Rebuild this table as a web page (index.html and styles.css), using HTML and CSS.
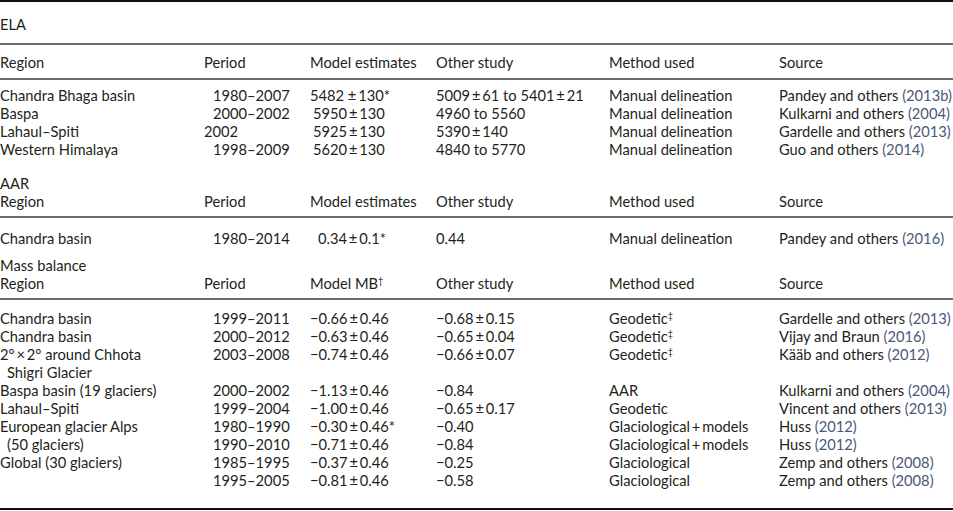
FILE: index.html
```html
<!DOCTYPE html>
<html lang="en">
<head>
<meta charset="utf-8">
<title>ELA, AAR and mass balance comparison</title>
<link rel="stylesheet" href="styles.css">
</head>
<body>
<div class="tbl">
  <div class="sec title-sec">
    <div class="row"><span class="full">ELA</span></div>
  </div>
  <div class="sec head-sec first-head">
    <div class="row"><span>Region</span><span>Period</span><span>Model estimates</span><span>Other study</span><span>Method used</span><span>Source</span></div>
  </div>
  <div class="sec body-sec ela">
    <div class="row"><span>Chandra Bhaga basin</span><span class="rng">1980–2007</span><span>5482 ±&#8201;130*</span><span>5009&#8201;±&#8201;61 to 5401&#8201;±&#8201;21</span><span>Manual delineation</span><span>Pandey and others <span class="yr">(2013b)</span></span></div>
    <div class="row"><span>Baspa</span><span class="rng">2000–2002</span><span class="ind">5950&#8201;±&#8201;130</span><span>4960 to 5560</span><span>Manual delineation</span><span>Kulkarni and others <span class="yr">(2004)</span></span></div>
    <div class="row"><span>Lahaul–Spiti</span><span>2002</span><span class="ind">5925&#8201;±&#8201;130</span><span>5390&#8201;±&#8201;140</span><span>Manual delineation</span><span>Gardelle and others <span class="yr">(2013)</span></span></div>
    <div class="row"><span>Western Himalaya</span><span class="rng">1998–2009</span><span class="ind">5620&#8201;±&#8201;130</span><span>4840 to 5770</span><span>Manual delineation</span><span>Guo and others <span class="yr">(2014)</span></span></div>
  </div>
  <div class="sec head-sec aar-head">
    <div class="row"><span class="full">AAR</span></div>
    <div class="row"><span>Region</span><span>Period</span><span>Model estimates</span><span>Other study</span><span>Method used</span><span>Source</span></div>
  </div>
  <div class="sec body-sec aar">
    <div class="row"><span>Chandra basin</span><span class="rng">1980–2014</span><span class="ind2">0.34&#8201;±&#8201;0.1*</span><span>0.44</span><span>Manual delineation</span><span>Pandey and others <span class="yr">(2016)</span></span></div>
  </div>
  <div class="sec head-sec mb-head">
    <div class="row"><span class="full">Mass balance</span></div>
    <div class="row"><span>Region</span><span>Period</span><span>Model MB<sup>†</sup></span><span>Other study</span><span>Method used</span><span>Source</span></div>
  </div>
  <div class="sec body-sec mb">
    <div class="row"><span>Chandra basin</span><span class="rng">1999–2011</span><span>−0.66&#8201;±&#8201;0.46</span><span>−0.68&#8201;±&#8201;0.15</span><span>Geodetic<sup>‡</sup></span><span>Gardelle and others <span class="yr">(2013)</span></span></div>
    <div class="row"><span>Chandra basin</span><span class="rng">2000–2012</span><span>−0.63&#8201;±&#8201;0.46</span><span>−0.65&#8201;±&#8201;0.04</span><span>Geodetic<sup>‡</sup></span><span>Vijay and Braun <span class="yr">(2016)</span></span></div>
    <div class="row"><span>2°&#8201;×&#8201;2° around Chhota</span><span class="rng">2003–2008</span><span>−0.74&#8201;±&#8201;0.46</span><span>−0.66&#8201;±&#8201;0.07</span><span>Geodetic<sup>‡</sup></span><span>Kääb and others <span class="yr">(2012)</span></span></div>
    <div class="row"><span class="cont">Shigri Glacier</span></div>
    <div class="row"><span>Baspa basin (19 glaciers)</span><span class="rng">2000–2002</span><span>−1.13&#8201;±&#8201;0.46</span><span>−0.84</span><span>AAR</span><span>Kulkarni and others <span class="yr">(2004)</span></span></div>
    <div class="row"><span>Lahaul–Spiti</span><span class="rng">1999–2004</span><span>−1.00&#8201;±&#8201;0.46</span><span>−0.65&#8201;±&#8201;0.17</span><span>Geodetic</span><span>Vincent and others <span class="yr">(2013)</span></span></div>
    <div class="row"><span>European glacier Alps</span><span class="rng">1980–1990</span><span>−0.30&#8201;±&#8201;0.46*</span><span>−0.40</span><span>Glaciological&#8201;+&#8201;models</span><span>Huss <span class="yr">(2012)</span></span></div>
    <div class="row"><span class="cont">(50 glaciers)</span><span class="rng">1990–2010</span><span>−0.71&#8201;±&#8201;0.46</span><span>−0.84</span><span>Glaciological&#8201;+&#8201;models</span><span>Huss <span class="yr">(2012)</span></span></div>
    <div class="row"><span>Global (30 glaciers)</span><span class="rng">1985–1995</span><span>−0.37&#8201;±&#8201;0.46</span><span>−0.25</span><span>Glaciological</span><span>Zemp and others <span class="yr">(2008)</span></span></div>
    <div class="row"><span></span><span class="rng">1995–2005</span><span>−0.81&#8201;±&#8201;0.46</span><span>−0.58</span><span>Glaciological</span><span>Zemp and others <span class="yr">(2008)</span></span></div>
  </div>
</div>
</body>
</html>
```

FILE: styles.css
```css
html, body {
  margin: 0;
  padding: 0;
  background: #ffffff;
}

body {
  width: 953px;
  height: 511px;
  overflow: hidden;
  font-family: "Lato", "Open Sans", sans-serif;
  font-size: 14.7px;
  color: #231f20;
}

.tbl {
  width: 953px;
  border-top: 2px solid #111111;
  border-bottom: 2px solid #111111;
}

.row {
  display: grid;
  grid-template-columns: 204px 106px 126px 173px 170px 174px;
  height: 18px;
  line-height: 18px;
  white-space: nowrap;
}

.row > span {
  display: block;
}

.row > .full {
  grid-column: 1 / -1;
}

.title-sec {
  padding: 13px 0 10px;
  border-bottom: 2px solid #6e6e6e;
}

.head-sec {
  border-bottom: 2px solid #6e6e6e;
}

.first-head {
  padding: 8px 0 7px;
}

.ela {
  padding: 6px 0 0;
}

.aar-head {
  padding: 16px 0 6px;
}

.aar {
  padding: 11px 0 0;
}

.mb-head {
  padding: 9px 0 6px;
}

.mb {
  padding: 9px 0 19px;
}

.rng { padding-left: 9px; }
.ind { padding-left: 3px; }
.ind2 { padding-left: 8px; }
.cont { padding-left: 7px; }

.yr { color: #4a5878; }

sup {
  font-size: 9px;
  line-height: 0;
  vertical-align: 5px;
}
```
